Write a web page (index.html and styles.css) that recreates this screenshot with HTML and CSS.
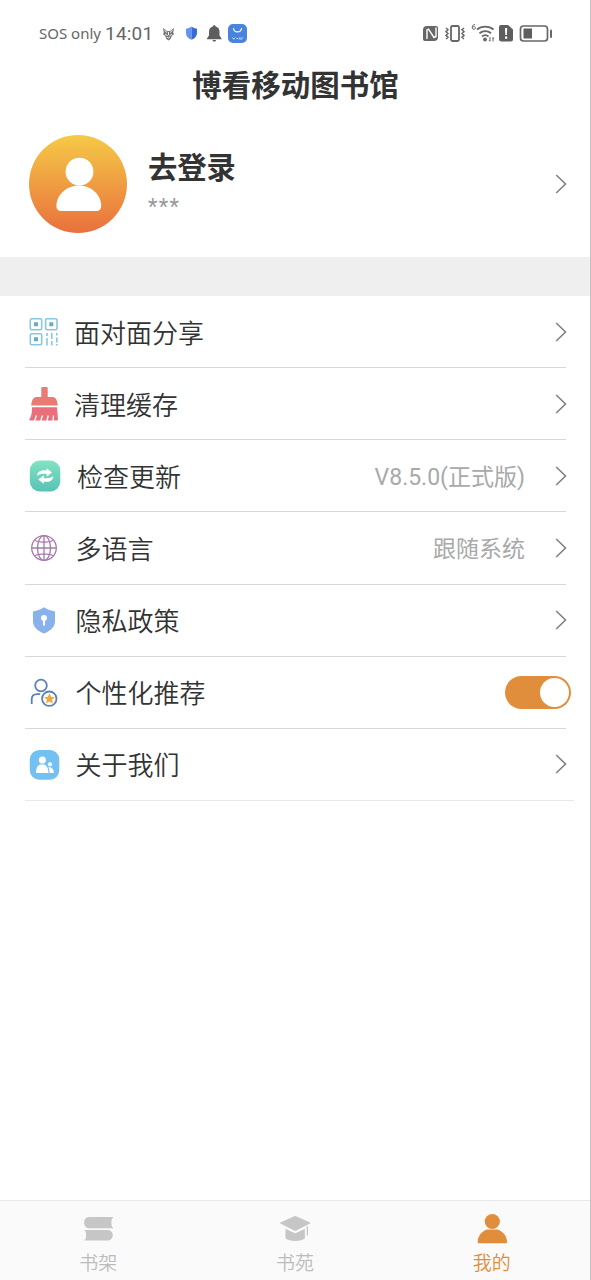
FILE: index.html
```html
<!DOCTYPE html>
<html lang="zh-CN">
<head>
<meta charset="utf-8">
<title>博看移动图书馆</title>
<link rel="stylesheet" href="styles.css">
</head>
<body>
<div class="app">
  <header class="status">
    <span class="carrier">SOS only</span>
    <span class="clock">14:01</span>
    <svg class="status-left" width="90" height="24" viewBox="158 21 90 24">
      <path d="M163 28l4 3h3l4-3-.8 5 1 1-2.4 2-1.200 3-2.100 1.500-2.100-1.500-1.200-3-2.400-2 1-1z" fill="#777"/>
      <path d="M164.500 30.500l2.500 2M172.500 30.500l-2.500 2M165 34.500l2.500 1M172 34.500l-2.500 1M168.500 32v3M167 37l1.500 1 1.500-1" stroke="#fff" stroke-width=".9" fill="none"/>
      <path d="M191.500 26.500c-2 1.600-3.500 2-5.500 2.200v4.300c0 3.300 2.400 5.600 5.500 6.800z" fill="#6293f2"/>
      <path d="M191.500 26.500c2 1.600 3.500 2 5.500 2.200v4.300c0 3.300-2.400 5.600-5.500 6.800z" fill="#386bd6"/>
      <path d="M214.300 25.200c.9 0 1.300.5 1.300 1.300 2.500.7 3.900 2.500 3.900 5.200v3.800l2 3v.8H207v-.8l2-3v-3.800c0-2.700 1.400-4.500 3.900-5.200 0-.8.500-1.300 1.400-1.300zM212.500 40h3.600c-.4 2-3.200 2-3.600 0z" fill="#5e5e5e"/>
      <rect x="228" y="24" width="19" height="19" rx="5" fill="#4a83df"/>
      <path d="M233.500 28.500c.8 4.500 7.200 4.500 8 0" stroke="#fff" stroke-width="1.200" fill="none" stroke-linecap="round"/>
      <path d="M232.500 37.500l1.300 1.800 1.500-1.800M236.500 38.500h1.500M239.200 37.500v2M241 37.500v2l2-2" stroke="#e4edff" stroke-width=".8" fill="none"/>
    </svg>
    <svg class="status-right" width="132" height="24" viewBox="421 21 132 24">
      <path d="M427 26h9a2 2 0 0 1 2 2v9a4 4 0 0 1-4 4h-9a2 2 0 0 1-2-2v-9a4 4 0 0 1 4-4z" fill="#676767"/>
      <path d="M427 39v-9l1.500-.8 5.500 8.300 2-1v-9" stroke="#fff" stroke-width="1.400" fill="none"/>
      <g stroke="#676767" fill="none">
        <rect x="451" y="26" width="8" height="15" rx="1.500" stroke-width="1.800"/>
        <path d="M446 28l2 1.800-2 1.900 2 1.800-2 1.900 2 1.800-2 1.800M464 28l-2 1.800 2 1.900-2 1.800 2 1.900-2 1.800 2 1.800" stroke-width="1.500"/>
        <path d="M477 29.500c4.500-3.700 12-3.700 16.500 0M479.500 33.200c3.300-2.700 8.200-2.700 11.500 0M482 36.500c2-1.700 4.500-1.700 6.500 0" stroke-width="1.800"/>
        <path d="M475 24.500c-3-.5-3.500 4.800-1.200 4.800 2.300 0 1.900-3.100 0-3-.9.100-1.600.7-1.600 1.500" stroke-width="1"/>
        <path d="M490 37v4M489 40l1 1.500M493 41.500v-4M494 39l-1-1.500" stroke-width="1"/>
        <rect x="520.500" y="26" width="27" height="15" rx="3" stroke-width="1.700"/>
      </g>
      <circle cx="485" cy="39.500" r="1.900" fill="#676767"/>
      <path d="M501 25h7l5 4.500V39a2.500 2.500 0 0 1-2.500 2.500h-9A2.500 2.500 0 0 1 499 39V27a2 2 0 0 1 2-2z" fill="#5e5e5e"/>
      <path d="M505 28h2.200l-.3 7h-1.600zM505 36.500h2.200v2.200H505z" fill="#fff"/>
      <rect x="523.500" y="28.500" width="8.500" height="10" fill="#5e5e5e"/>
      <rect x="550" y="29.500" width="2" height="8.500" rx="1" fill="#676767"/>
    </svg>
  </header>

  <h1 class="title">博看移动图书馆</h1>

  <section class="profile">
    <svg class="avatar" width="98" height="98" viewBox="0 0 98 98">
      <defs><linearGradient id="sun" x1="0" y1="0" x2="0" y2="1"><stop offset="0" stop-color="#f5ca46"/><stop offset="1" stop-color="#e9703d"/></linearGradient></defs>
      <circle cx="49" cy="49" r="49" fill="url(#sun)"/>
      <circle cx="50.500" cy="36.700" r="13.900" fill="#fff"/>
      <path d="M50 50.500c12.500 0 22.200 9.500 22.200 20.500 0 3.300-1.700 5-5 5H32.400c-3.300 0-5-1.700-5-5 0-11 10.100-20.500 22.600-20.500z" fill="#fff"/>
    </svg>
    <div class="who">
      <div class="name">去登录</div>
      <div class="account">***</div>
    </div>
    <svg class="chevron" width="12" height="20" viewBox="0 0 12 20"><path d="M1.200 1l9.300 9-9.300 9"/></svg>
  </section>

  <div class="band"></div>

  <ul class="menu">
    <li class="row">
      <svg class="icon" width="40" height="40" viewBox="24 312 40 40">
        <g fill="none" stroke="#89c6e2" stroke-width="1.600">
          <rect x="30.300" y="318.800" width="11.400" height="11" rx="1.500"/>
          <rect x="45.600" y="318.800" width="11.400" height="11" rx="1.500"/>
          <rect x="30.300" y="333.800" width="11.400" height="11" rx="1.500"/>
          <path d="M47 333v3M47 338v7.500M51.800 333v6M51.800 341v4.500M56.800 333v2.500M56.800 337.500v5M56.800 344v1.500"/>
        </g>
        <path d="M34 322.300h4v4h-4zM49.300 322.300h4v4h-4zM34 337.300h4v4h-4z" fill="#60acd2"/>
      </svg>
      <span class="label label-near">面对面分享</span>
      <svg class="chevron" width="12" height="20" viewBox="0 0 12 20"><path d="M1.200 1l9.300 9-9.300 9"/></svg>
    </li>
    <li class="row">
      <svg class="icon" width="40" height="40" viewBox="24 384 40 40">
        <path d="M42.300 387h4.400a1 1 0 0 1 1 1v9h5c2.800 0 4.500 2.700 5.100 8.500H31.200c.6-5.800 2.300-8.500 5.100-8.500h5v-9a1 1 0 0 1 1-1z" fill="#ea7b73"/>
        <path d="M32 407.200h25l1 12.300c0 .6-.3.900-.9.900H30.500c-1.200 0-1.500-.7-.9-1.500 1.800-2.500 2.400-6 2.400-11.700z" fill="#ea6f7b"/>
        <path d="M36.500 415.500l-2 5.500M42.500 415.500l-1.800 5.500M48.300 415.500l-1.400 5.500M53.500 415.500l-.5 5.500" stroke="#fff" stroke-width="1.300"/>
      </svg>
      <span class="label label-near">清理缓存</span>
      <svg class="chevron" width="12" height="20" viewBox="0 0 12 20"><path d="M1.200 1l9.300 9-9.300 9"/></svg>
    </li>
    <li class="row">
      <svg class="icon" width="40" height="40" viewBox="24 456 40 40">
        <defs><linearGradient id="mint" x1="0" y1="0" x2="0" y2="1"><stop offset="0" stop-color="#83e3c2"/><stop offset="1" stop-color="#57c2b5"/></linearGradient></defs>
        <rect x="29.800" y="460.500" width="30.500" height="31" rx="10" fill="url(#mint)"/>
        <path d="M37 475.800c.3-4.200 4.200-6.600 9.700-5.300v-2.300l5.300 4.300-5.300 4.200v-2.600c-3.800-.7-6.500-.1-9.700 1.700zM53.500 476.200c-.3 4.200-4.200 6.600-9.700 5.300v2.300l-5.600-4.300 5.600-4.200v2.600c3.800.7 6.500.1 9.700-1.700z" fill="#fff"/>
      </svg>
      <span class="label label-far">检查更新</span>
      <span class="value">V8.5.0(正式版)</span>
      <svg class="chevron" width="12" height="20" viewBox="0 0 12 20"><path d="M1.200 1l9.300 9-9.300 9"/></svg>
    </li>
    <li class="row">
      <svg class="icon" width="40" height="40" viewBox="24 528 40 40">
        <g fill="none" stroke="#a77baa" stroke-width="1.300">
          <circle cx="44" cy="548" r="12.300"/>
          <ellipse cx="44" cy="548" rx="6.500" ry="12.300"/>
          <path d="M44 535.700v24.600M31.700 548h24.600M34.500 540.500c5.500 2.300 13.500 2.300 19 0M34.500 555.500c5.500-2.300 13.500-2.300 19 0"/>
        </g>
      </svg>
      <span class="label">多语言</span>
      <span class="value">跟随系统</span>
      <svg class="chevron" width="12" height="20" viewBox="0 0 12 20"><path d="M1.200 1l9.300 9-9.300 9"/></svg>
    </li>
    <li class="row">
      <svg class="icon" width="40" height="40" viewBox="24 600 40 40">
        <path d="M44 607.300c3.500 2.300 7 3.500 11 4.200v9.500c0 6-4.500 10-11 12.500-6.500-2.500-11-6.500-11-12.500v-9.500c4-.7 7.500-1.900 11-4.200z" fill="#89b1eb"/>
        <circle cx="44" cy="618" r="3" fill="#fff"/><path d="M43 619h2v6.500h-2z" fill="#fff"/>
      </svg>
      <span class="label">隐私政策</span>
      <svg class="chevron" width="12" height="20" viewBox="0 0 12 20"><path d="M1.200 1l9.300 9-9.300 9"/></svg>
    </li>
    <li class="row">
      <svg class="icon" width="40" height="40" viewBox="24 672 40 40">
        <g fill="none" stroke="#5b82b4" stroke-width="1.800">
          <circle cx="41" cy="685.500" r="5.800"/>
          <path d="M31.700 704v-4.500c0-3.500 2.200-5.300 5.500-5.300h3"/>
          <circle cx="49.300" cy="698.700" r="7.200"/>
        </g>
        <path d="M49.500 693.300l1.700 3.500 3.700.4-2.800 2.500.8 3.800-3.400-1.900-3.400 1.900.8-3.800-2.800-2.500 3.700-.4z" fill="#ecab3e"/>
      </svg>
      <span class="label">个性化推荐</span>
      <span class="switch"></span>
    </li>
    <li class="row row-last">
      <svg class="icon" width="40" height="40" viewBox="24 744 40 40">
        <rect x="29.800" y="750" width="29.500" height="29.700" rx="9.500" fill="#73c1f3"/>
        <circle cx="42.400" cy="760" r="3.500" fill="#fff"/>
        <path d="M42 764.200c4 0 6.300 3.200 6.500 8.800H36c.1-5.600 2-8.800 6-8.800z" fill="#fff"/>
        <circle cx="50" cy="764.300" r="2.100" fill="#fff"/>
        <path d="M49 767.300c3 0 4.800 1.800 4.800 5.700h-4.100c-.1-2.300-.5-4-1.300-5.600z" fill="#fff"/>
      </svg>
      <span class="label">关于我们</span>
      <svg class="chevron" width="12" height="20" viewBox="0 0 12 20"><path d="M1.200 1l9.300 9-9.300 9"/></svg>
    </li>
  </ul>

  <nav class="tabs">
    <div class="tab">
      <svg width="34" height="34" viewBox="81 1212 34 34" fill="#c6c6c6">
        <path d="M89 1217h24v1l-1 .5c-.8 3-.8 5 0 8.500l1 .5v.7H89c-6.400 0-6.400-11.200 0-11.200z"/>
        <path d="M84.500 1230H108c6.400 0 6.400 10.500 0 10.500H84.500v-.8l1-.4c.8-3 .8-5 0-8l-1-.5z"/>
      </svg>
      <span>书架</span>
    </div>
    <div class="tab">
      <svg width="34" height="34" viewBox="278 1212 34 34" fill="#c6c6c6">
        <path d="M294.200 1216.200q1-.5 2 0l13.800 6.200q1 .6 0 1.200l-13.800 6.800q-1 .5-2 0l-13.800-6.800q-1-.6 0-1.200z"/>
        <path d="M285.500 1228.800l8.200 4q1.500.7 3 0l8.200-4v9.500c-3.500 3.600-15.900 3.600-19.400 0z"/>
        <path d="M306.700 1226.500l1.300-.7v9.700h-1.300z"/>
      </svg>
      <span>书苑</span>
    </div>
    <div class="tab tab-active">
      <svg width="34" height="34" viewBox="475 1212 34 34" fill="#e08e3c">
        <circle cx="492.300" cy="1221.500" r="7.600"/>
        <path d="M487 1229.500h10.500c5.500 2 9.500 6.500 9.500 12.500 0 .9-.3 1.200-1.200 1.200h-26.900c-.9 0-1.200-.3-1.200-1.200 0-6 3.800-10.500 9.300-12.500z"/>
      </svg>
      <span>我的</span>
    </div>
  </nav>
</div>
</body>
</html>
```
FILE: styles.css
```css
* { box-sizing: border-box; }

body {
  margin: 0;
  background: #fff;
  color: #333;
  font-family: "Noto Sans CJK SC", sans-serif;
}

svg { display: block; flex: none; }

.app {
  display: flex;
  flex-direction: column;
  width: 591px;
  height: 1280px;
  border-right: 1px solid #c2c2c2;
}

.status {
  display: flex;
  align-items: center;
  height: 66px;
  padding: 0 37px 0 39px;
  color: #666;
  line-height: 24px;
}
.carrier {
  width: 66px;
  font-family: "Noto Sans", sans-serif;
  font-size: 15px;
  white-space: nowrap;
}
.clock {
  width: 53px;
  padding-top: 1px;
  font-family: Roboto, sans-serif;
  font-size: 19px;
  letter-spacing: 0.200px;
}
.status-right { margin-left: auto; }

.title {
  height: 35px;
  margin: 0;
  font-size: 29.500px;
  font-weight: 700;
  line-height: 35px;
  text-align: center;
  text-indent: 1px;
}

.profile {
  display: flex;
  align-items: center;
  height: 156px;
  padding: 10px 23px 0 29px;
}
.who {
  flex: 1;
  padding-left: 21px;
}
.name {
  font-size: 29.300px;
  font-weight: 700;
  line-height: 40px;
}
.account {
  height: 38px;
  padding-top: 3px;
  color: #999;
  font-family: Roboto, sans-serif;
  font-size: 22px;
  letter-spacing: 1.300px;
  line-height: 38px;
}

.chevron path {
  fill: none;
  stroke: #858585;
  stroke-width: 1.700;
}

.band {
  height: 39px;
  background: #efefef;
}

.menu {
  margin: 0;
  padding: 0 24px 0 25px;
  list-style: none;
}
.row {
  display: flex;
  align-items: center;
  height: 72.150px;
  border-bottom: 1.500px solid #d8d8d8;
}
.row-last {
  margin-right: -8px;
  padding-right: 8px;
  border-bottom: 1px solid #e8e8e8;
}
.icon { margin-left: -1px; }
.label {
  flex: 1;
  padding-left: 11.500px;
  font-size: 26px;
  font-weight: 350;
  line-height: 38px;
}
.label-near { padding-left: 10px; }
.label-far { padding-left: 13px; }
.value {
  padding-top: 5px;
  color: #a9a9a9;
  font-family: Roboto, "Noto Sans CJK SC", sans-serif;
  font-size: 23px;
  font-weight: 400;
  line-height: 34px;
}
.row .chevron { margin: 0 -1px 0 30px; }

.switch {
  display: flex;
  justify-content: flex-end;
  width: 66px;
  height: 33px;
  margin-right: -5px;
  padding: 2px;
  border-radius: 17px;
  background: #e18e3c;
}
.switch::after {
  content: "";
  width: 29px;
  height: 29px;
  border-radius: 50%;
  background: #fff;
}

.tabs {
  display: grid;
  grid-template-columns: repeat(3, 1fr);
  height: 80px;
  margin-top: auto;
  border-top: 1px solid #e9e9e9;
  background: #fafafa;
}
.tab {
  display: flex;
  flex-direction: column;
  align-items: center;
  padding-top: 11px;
  color: #bcbcbc;
  font-size: 19px;
  font-weight: 350;
  line-height: 32px;
}
.tab-active { color: #e08e3c; }
```
